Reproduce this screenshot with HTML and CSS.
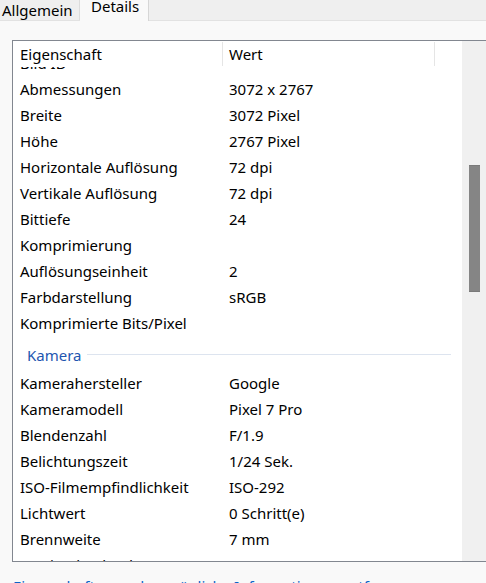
FILE: index.html
```html
<!DOCTYPE html>
<html lang="de">
<head>
<meta charset="utf-8">
<title>Eigenschaften – Details</title>
<link rel="stylesheet" href="styles.css">
</head>
<body>
<div class="tabstrip">
  <div class="tab">Allgemein</div>
  <div class="tab tab-active">Details</div>
</div>
<div class="panel">
  <div class="listbox">
    <div class="list">
      <div class="header">
        <div class="hcell hcell-name">Eigenschaft</div>
        <div class="hcell hcell-value">Wert</div>
        <div class="hcell hcell-rest"></div>
      </div>
      <div class="rows">
        <div class="rows-inner">
          <div class="row"><span>Bild ID</span><span></span></div>
          <div class="row"><span>Abmessungen</span><span>3072 x 2767</span></div>
          <div class="row"><span>Breite</span><span>3072 Pixel</span></div>
          <div class="row"><span>Höhe</span><span>2767 Pixel</span></div>
          <div class="row"><span>Horizontale Auflösung</span><span>72 dpi</span></div>
          <div class="row"><span>Vertikale Auflösung</span><span>72 dpi</span></div>
          <div class="row"><span>Bittiefe</span><span>24</span></div>
          <div class="row"><span>Komprimierung</span><span></span></div>
          <div class="row"><span>Auflösungseinheit</span><span>2</span></div>
          <div class="row"><span>Farbdarstellung</span><span>sRGB</span></div>
          <div class="row"><span>Komprimierte Bits/Pixel</span><span></span></div>
          <div class="group"><span class="group-title">Kamera</span><span class="group-line"></span></div>
          <div class="row"><span>Kamerahersteller</span><span>Google</span></div>
          <div class="row"><span>Kameramodell</span><span>Pixel 7 Pro</span></div>
          <div class="row"><span>Blendenzahl</span><span>F/1.9</span></div>
          <div class="row"><span>Belichtungszeit</span><span>1/24 Sek.</span></div>
          <div class="row"><span>ISO-Filmempfindlichkeit</span><span>ISO-292</span></div>
          <div class="row"><span>Lichtwert</span><span>0 Schritt(e)</span></div>
          <div class="row"><span>Brennweite</span><span>7 mm</span></div>
          <div class="row"><span>Maximale Blende</span><span>1.85199985435164534</span></div>
        </div>
      </div>
    </div>
    <div class="scrollbar"><div class="thumb"></div></div>
  </div>
  <a class="link" href="#">Eigenschaften und persönliche Informationen entfernen</a>
</div>
</body>
</html>
```

FILE: styles.css
```css
html, body {
  margin: 0;
  padding: 0;
}
body {
  width: 486px;
  height: 583px;
  overflow: hidden;
  background: #f9f9f9;
  font-family: "Noto Sans", "Open Sans", sans-serif;
  font-size: 15px;
  color: #000;
}
.tabstrip {
  display: flex;
  height: 20px;
  background: #efefef;
  border-bottom: 1px solid #e2e2e2;
}
.tab {
  box-sizing: border-box;
  height: 20px;
  line-height: 20px;
  padding-left: 2px;
  width: 80px;
  border-right: 1px solid #dcdcdc;
  position: relative;
  overflow: hidden;
  white-space: nowrap;
}
.tab-active {
  width: 69px;
  padding-left: 11px;
  height: 21px;
  line-height: 13px;
  background: #f9f9f9;
  border-right: 1px solid #d6d6d6;
}
.panel {
  padding: 19px 0 0 12px;
}
.listbox {
  display: flex;
  height: 520px;
  border: 1px solid #828790;
  border-right: none;
  background: #fff;
}
.list {
  flex: 1;
  display: flex;
  flex-direction: column;
  min-width: 0;
}
.header {
  display: flex;
  height: 26px;
  flex: none;
}
.hcell {
  box-sizing: border-box;
  line-height: 26px;
  padding-left: 7px;
}
.hcell-name {
  width: 210px;
  border-right: 1px solid #e5e5e5;
  margin: 1px 0;
  line-height: 24px;
}
.hcell-value {
  width: 212px;
  padding-left: 6px;
  border-right: 1px solid #e5e5e5;
  margin: 1px 0;
  line-height: 24px;
}
.rows {
  flex: 1;
  overflow: hidden;
}
.rows-inner {
  margin-top: -16px;
}
.row {
  display: grid;
  grid-template-columns: 209px 1fr;
  height: 26px;
  line-height: 24px;
  white-space: nowrap;
}
.row span {
  padding-left: 7px;
}
.group {
  display: flex;
  align-items: center;
  height: 34px;
  padding-left: 14px;
  margin-right: 11px;
}
.group-title {
  color: #1e56b0;
  line-height: 34px;
  position: relative;
  top: 1px;
}
.group-line {
  flex: 1;
  height: 1px;
  background: #dde4ef;
  margin-left: 5px;
}
.scrollbar {
  width: 24px;
  flex: none;
  background: #f0f0f0;
  padding-top: 124px;
  box-sizing: border-box;
}
.thumb {
  width: 11px;
  height: 127px;
  margin-left: 7px;
  background: #858585;
  border-top: 1px solid #7a7a7a;
  border-bottom: 1px solid #7a7a7a;
  box-sizing: border-box;
}
.link {
  display: block;
  margin-top: 14px;
  margin-left: 1px;
  line-height: 20px;
  color: #0a64c8;
  text-decoration: none;
  white-space: nowrap;
}
```
